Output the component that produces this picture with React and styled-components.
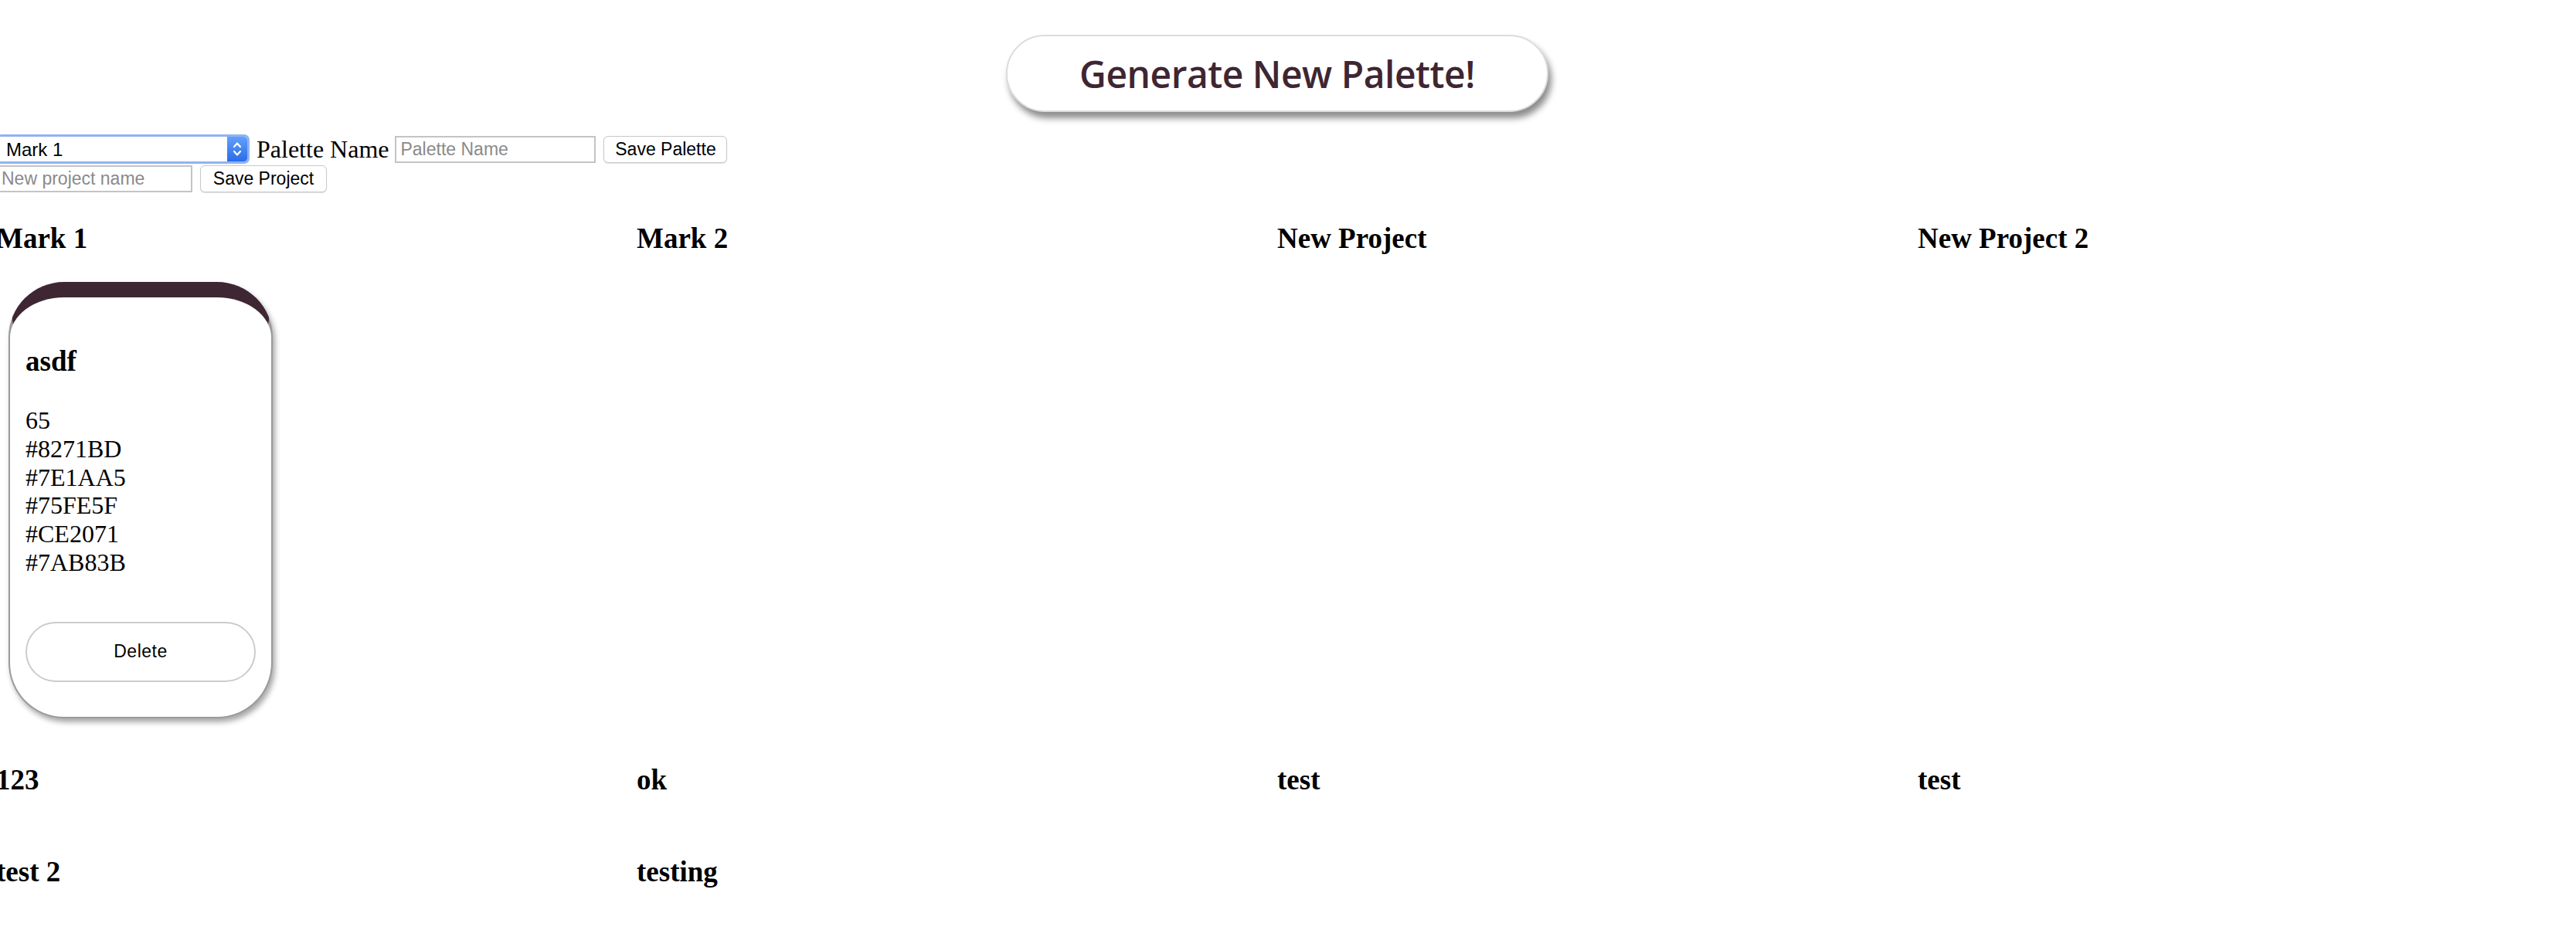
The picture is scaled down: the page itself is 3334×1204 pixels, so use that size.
import React, { useState } from "react";
import styled, { createGlobalStyle } from "styled-components";

const GlobalStyle = createGlobalStyle`
  body {
    margin: 0;
    background: #fff;
    font-family: "Liberation Serif", "Times New Roman", serif;
    font-size: 32px;
    overflow: hidden;
  }
`;

const projects = [
  { name: "Mark 1", palettes: [{ name: "asdf", colors: ["65", "#8271BD", "#7E1AA5", "#75FE5F", "#CE2071", "#7AB83B"] }] },
  { name: "Mark 2", palettes: [] },
  { name: "New Project", palettes: [] },
  { name: "New Project 2", palettes: [] },
  { name: "123", palettes: [] },
  { name: "ok", palettes: [] },
  { name: "test", palettes: [] },
  { name: "test", palettes: [] },
  { name: "test 2", palettes: [] },
  { name: "testing", palettes: [] },
];

function App() {
  const [selected, setSelected] = useState("Mark 1");

  return (
    <Page>
      <GlobalStyle />
      <Header>
        <GenerateButton>Generate New Palette!</GenerateButton>
      </Header>
      <Form>
        <FormRow>
          <SelectBox>
            <Select value={selected} onChange={(e) => setSelected(e.target.value)}>
              {projects.slice(0, 4).map((p) => (
                <option key={p.name}>{p.name}</option>
              ))}
            </Select>
            <SelectArrow>
              <svg width="14" height="24" viewBox="0 0 14 24" fill="none" stroke="#fff" strokeWidth="2.2" strokeLinecap="round" strokeLinejoin="round">
                <path d="M3 9 L7 4.5 L11 9" />
                <path d="M3 15 L7 19.5 L11 15" />
              </svg>
            </SelectArrow>
          </SelectBox>
          <Label>Palette Name</Label>
          <TextInput width={260} placeholder="Palette Name" />
          <SmallButton width={160}>Save Palette</SmallButton>
        </FormRow>
        <FormRow>
          <TextInput width={254} placeholder="New project name" />
          <SmallButton width={164}>Save Project</SmallButton>
        </FormRow>
      </Form>
      <Grid>
        {projects.map((project, index) => (
          <Project key={index}>
            <ProjectTitle>{project.name}</ProjectTitle>
            {project.palettes.map((palette) => (
              <Card key={palette.name}>
                <CardTitle>{palette.name}</CardTitle>
                <Colors>
                  {palette.colors.map((c) => (
                    <li key={c}>{c}</li>
                  ))}
                </Colors>
                <DeleteButton>Delete</DeleteButton>
              </Card>
            ))}
          </Project>
        ))}
      </Grid>
    </Page>
  );
}

export default App;

const Page = styled.div`
  margin-left: -5px;
  width: 3316px;
`;

const Header = styled.div`
  display: flex;
  justify-content: center;
  padding-top: 45px;
`;

const GenerateButton = styled.button`
  width: 702px;
  height: 100px;
  border-radius: 50px;
  border: 2px solid #dcdcdc;
  background: #fff;
  box-shadow: 4px 8px 8px rgba(0, 0, 0, 0.45);
  font-family: "Open Sans", sans-serif;
  font-size: 48px;
  font-weight: 600;
  letter-spacing: -0.5px;
  color: #3e2632;
  cursor: pointer;
`;

const Form = styled.div`
  margin-top: 29px;
  display: flex;
  flex-direction: column;
  gap: 2px;
`;

const FormRow = styled.div`
  display: flex;
  align-items: center;
`;

const SelectBox = styled.div`
  display: flex;
  width: 328px;
  height: 38px;
  box-sizing: border-box;
  border: 3px solid #8fb3f3;
  border-radius: 7px;
  background: #fff;
  overflow: hidden;
`;

const Select = styled.select`
  flex: 1;
  appearance: none;
  border: none;
  outline: none;
  background: #fff;
  padding: 0 0 0 10px;
  font-family: "Liberation Sans", Arial, sans-serif;
  font-size: 24px;
  color: #000;
`;

const SelectArrow = styled.div`
  width: 26px;
  display: flex;
  align-items: center;
  justify-content: center;
  background: linear-gradient(#62a0fa, #2a6ce8);
  border-radius: 0 4px 4px 0;
`;

const Label = styled.span`
  margin: 0 8px 0 9px;
  font-size: 32px;
`;

const TextInput = styled.input`
  width: ${(props) => props.width}px;
  height: 35px;
  box-sizing: border-box;
  border: 2px solid #c4c4c4;
  padding: 0 5px;
  font-family: "Liberation Sans", Arial, sans-serif;
  font-size: 23px;
  outline: none;
  &::placeholder {
    color: #8a8a8a;
  }
`;

const SmallButton = styled.button`
  width: ${(props) => props.width}px;
  height: 35px;
  margin-left: 10px;
  border: 1px solid #c8c8c8;
  border-radius: 6px;
  background: #fff;
  box-shadow: 0 1px 1px rgba(0, 0, 0, 0.12);
  font-family: "Liberation Sans", Arial, sans-serif;
  font-size: 23px;
  color: #000;
  padding: 0;
`;

const Grid = styled.div`
  display: grid;
  grid-template-columns: repeat(4, 1fr);
`;

const Project = styled.div`
  display: flow-root;
`;

const ProjectTitle = styled.h3`
  margin: 38px 0;
  font-size: 37px;
  line-height: 43px;
  font-weight: bold;
`;

const Card = styled.div`
  width: 342px;
  box-sizing: border-box;
  margin: -3px 0 20px 16px;
  padding: 24px 20px 45px;
  background: #fff;
  border: 2px solid #9a9a9a;
  border-top: 20px solid #3e2632;
  border-radius: 72px;
  box-shadow: 3px 5px 7px rgba(0, 0, 0, 0.35);
  display: flow-root;
`;

const CardTitle = styled.h3`
  margin: 37px 0;
  font-size: 37px;
  line-height: 43px;
`;

const Colors = styled.ul`
  list-style: none;
  margin: 0 0 58px;
  padding: 0;
  li {
    font-size: 32px;
    line-height: 36.8px;
  }
`;

const DeleteButton = styled.button`
  display: block;
  width: 100%;
  height: 78px;
  border-radius: 39px;
  border: 2px solid #cccccc;
  background: #fff;
  font-family: "Liberation Sans", Arial, sans-serif;
  font-size: 23px;
  letter-spacing: 0.5px;
  color: #000;
`;
